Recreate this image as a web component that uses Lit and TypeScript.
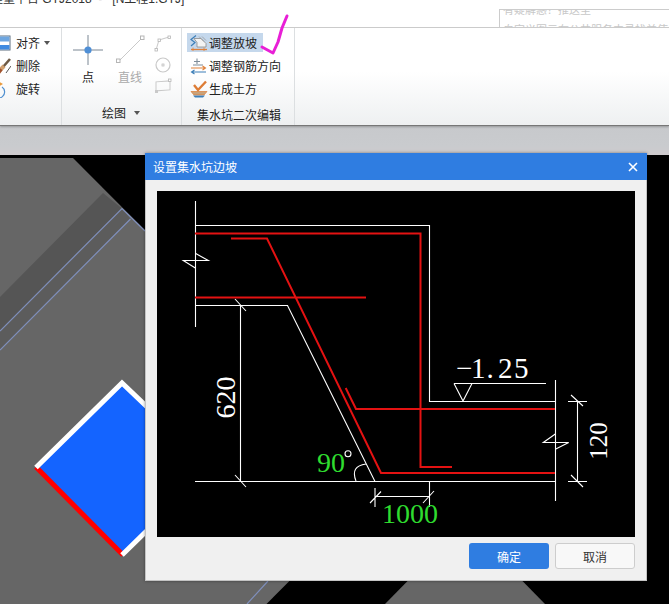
import { LitElement, html, css } from "lit";
import { customElement } from "lit/decorators.js";

const slopeIcon = html`<svg class="ico" width="18" height="18" viewBox="0 0 18 18" fill="none">
  <path d="M6 1.5L1 5.5L5 8.5L1 12" stroke="#3d7fb8" stroke-width="1.2"/>
  <path d="M4 4.5H11L16 9.5V13H7V8.5Z" fill="#f3f3f3" stroke="#8a8a8a" stroke-width=".8"/>
  <path d="M9 2.5L14 7.5M12 2.5L16 6.5" stroke="#9a9a9a" stroke-width=".8"/>
  <path d="M1 15.5H17" stroke="#e0813a" stroke-width="1.3"/>
  <path d="M3 13.5V17M14 13.5V17" stroke="#e0813a" stroke-width=".8"/>
</svg>`;
const rebarIcon = html`<svg class="ico" width="18" height="18" viewBox="0 0 18 18" fill="none">
  <path d="M7 1.5V7M4 4.5H10M3 8H13" stroke="#7f8d99" stroke-width="1.1"/>
  <path d="M1 11H15M12.5 9L15.5 11L12.5 13" stroke="#e0813a" stroke-width="1.1"/>
  <path d="M16 15H2M4.5 13L1.5 15L4.5 17" stroke="#3d7fb8" stroke-width="1.1"/>
</svg>`;
const earthIcon = html`<svg class="ico" width="18" height="18" viewBox="0 0 18 18" fill="none">
  <path d="M4 5L8 10L16 1.5" stroke="#dd7c35" stroke-width="2.4"/>
  <path d="M1 11.5H17L14 15H4Z" fill="#c9a27a" stroke="#dd7c35" stroke-width=".7"/>
  <path d="M3 15.5H15L13 17.5H5Z" fill="#3d7fb8"/>
</svg>`;
const alignIcon = html`<svg class="ico" width="14" height="16" viewBox="0 0 14 16">
  <rect x="0" y="1" width="13" height="14" fill="#fff" stroke="#5d6f80"/>
  <rect x="0" y="1.5" width="12.5" height="5" fill="#6ea6e0"/>
  <rect x="0" y="10" width="12.5" height="4.5" fill="#3f8ae0"/>
</svg>`;
const brushIcon = html`<svg class="ico" width="14" height="16" viewBox="0 0 14 16" fill="none">
  <path d="M13 1L6 9" stroke="#6d5a45" stroke-width="2.6"/>
  <path d="M7 8L3 12" stroke="#d0a070" stroke-width="4"/>
  <path d="M4 11L1 15" stroke="#a0522d" stroke-width="4"/>
  <path d="M9 15L14 8" stroke="#555" stroke-width="1"/>
</svg>`;
const rotateIcon = html`<svg class="ico" width="14" height="18" viewBox="0 0 14 18" fill="none">
  <path d="M5 5A6 6 0 1 1 1 4" stroke="#4f8fd0" stroke-width="1.2" transform="translate(0 2)"/>
  <path d="M1 1L6 4L1 7Z" fill="#e89a3c"/>
</svg>`;

@customElement("app-root")
export class AppRoot extends LitElement {
  static styles = css`
    :host {
      display: flex;
      flex-direction: column;
      position: relative;
      width: 669px;
      height: 604px;
      overflow: hidden;
      font-family: "Noto Sans CJK SC", "Liberation Sans", sans-serif;
      font-size: 12px;
      color: #222;
      background: #000;
    }
    .title {
      height: 27px;
      flex: none;
      background: #fff;
      border-bottom: 1px solid #cfcfcf;
      display: flex;
      justify-content: space-between;
      overflow: hidden;
    }
    .title-text {
      margin: -9px 0 0 -9px;
      line-height: 16px;
      height: 16px;
      white-space: pre;
      font-family: "Liberation Sans", "Noto Sans CJK SC", sans-serif;
      color: #333;
    }
    .notice {
      width: 170px;
      height: 18px;
      margin-top: 9px;
      flex: none;
      box-sizing: border-box;
      border: 1px solid #ccc;
      border-right: none;
      border-bottom: none;
      overflow: hidden;
      padding-left: 3px;
      color: #c8c8c8;
      font-size: 11px;
      line-height: 20px;
      white-space: nowrap;
    }
    .notice div:first-child { margin-top: -11px; }
    .ribbon {
      height: 97px;
      flex: none;
      display: flex;
      background: linear-gradient(#fff 0%, #fff 45%, #eef0f1 100%);
      border-bottom: 1px solid #777;
      box-shadow: 0 1px 2px rgba(0,0,0,.25);
      position: relative;
    }
    .group {
      display: flex;
      flex-direction: column;
      border-right: 1px solid #dcdfe1;
      box-sizing: border-box;
      overflow: hidden;
    }
    .g1 { width: 62px; padding-top: 3px; }
    .g2 { width: 120px; padding-bottom: 4px; }
    .g3 { width: 113px; padding: 5px 0 2px 5px; gap: 4px; }
    .row1 {
      height: 23px;
      display: flex;
      align-items: center;
      gap: 5px;
      margin-left: -3px;
    }
    .ico { flex: none; }
    .caret {
      width: 0;
      height: 0;
      border: 3px solid transparent;
      border-top: 4px solid #555;
      border-bottom: none;
      margin-left: -1px;
    }
    .tools { display: flex; padding-top: 7px; flex: 1; }
    .tool {
      display: flex;
      flex-direction: column;
      align-items: center;
      line-height: 16px;
      gap: 4px;
    }
    .t1 { width: 52px; }
    .t2 { width: 32px; }
    .t2 span { color: #aaa; }
    .minis {
      display: flex;
      flex-direction: column;
      margin-left: 8px;
      gap: 3px;
    }
    .glabel {
      display: flex;
      justify-content: center;
      align-items: center;
      line-height: 16px;
      gap: 6px;
      margin-top: auto;
    }
    .glabel .caret { margin-left: 2px; }
    .g2 .glabel { padding-right: 1px; }
    .g3 .glabel { padding-right: 3px; }
    .row3 {
      height: 19px;
      width: 76px;
      display: flex;
      align-items: center;
      gap: 1px;
      padding-left: 3px;
      box-sizing: border-box;
      white-space: nowrap;
    }
    .row3.active { background: #c5d8ec; }
    .strip {
      height: 29px;
      flex: none;
      background: linear-gradient(#c7c9cc, #c9cbce 70%, #cfcbce);
    }
    .canvas { display: block; flex: 1; min-height: 0; }
    .check { position: absolute; left: 0; top: 0; pointer-events: none; }
    .dialog {
      position: absolute;
      left: 145px;
      top: 153px;
      width: 502px;
      height: 428px;
      box-sizing: border-box;
      background: #f0f0f0;
      border: 1px solid #c4c4c4;
      border-top: none;
      box-shadow: 0 0 3px rgba(0,0,0,.4);
      display: flex;
      flex-direction: column;
    }
    .dlg-title {
      height: 27px;
      flex: none;
      margin: 0 -1px;
      background: #2f7de1;
      color: #fff;
      display: flex;
      align-items: center;
      justify-content: space-between;
      padding: 0 9px 0 8px;
    }
    .dlg-body {
      flex: 1;
      display: flex;
      flex-direction: column;
      padding: 11px 11px 11px;
      gap: 6px;
    }
    .draw { display: block; background: #000; }
    .btns { display: flex; justify-content: flex-end; gap: 6px; }
    .btn {
      width: 80px;
      height: 26px;
      box-sizing: border-box;
      border-radius: 3px;
      display: flex;
      align-items: center;
      justify-content: center;
    }
    .ok { background: #2f7de1; color: #fff; }
    .cancel { background: #f8f8f8; border: 1px solid #cdcdcd; color: #333; }
    .w { stroke: #fff; stroke-width: 1.1; fill: none; }
    .r { stroke: #e41212; stroke-width: 2; fill: none; }
    .tw { fill: #fff; font-family: "Liberation Serif", serif; }
    .tg { fill: #2fdc2f; font-family: "Liberation Serif", serif; }
  `;

  render() {
    return html`
      <div class="title">
        <div class="title-text">程量平台 GTJ2018  -   [N工程1.GTJ]</div>
        <div class="notice"><div>有疑解惑？推送至</div><div>自定义图元在公共服务中寻找并使用</div></div>
      </div>
      <div class="ribbon">
        <div class="group g1">
          <div class="row1">${alignIcon}<span>对齐</span><i class="caret"></i></div>
          <div class="row1">${brushIcon}<span>删除</span></div>
          <div class="row1">${rotateIcon}<span>旋转</span></div>
        </div>
        <div class="group g2">
          <div class="tools">
            <div class="tool t1">
              <svg width="30" height="30" viewBox="0 0 30 30" fill="none">
                <path d="M15 0V30M0 15H30" stroke="#7b8794"/>
                <circle cx="15" cy="15" r="3.6" fill="#4f8fd6"/>
              </svg>
              <span>点</span>
            </div>
            <div class="tool t2">
              <svg width="30" height="30" viewBox="0 0 30 30" fill="none">
                <path d="M4 26L27 3" stroke="#c9c9c9"/>
                <rect x="1.5" y="24" width="3.5" height="3.5" fill="#fff" stroke="#b5b5b5"/>
                <rect x="25.5" y="1" width="3.5" height="3.5" fill="#fff" stroke="#b5b5b5"/>
              </svg>
              <span>直线</span>
            </div>
            <div class="minis">
              <svg width="18" height="18" viewBox="0 0 18 18" fill="none">
                <path d="M2 15L5 5L15 2" stroke="#c9c9c9"/>
                <rect x="1" y="13.5" width="2.5" height="2.5" fill="#fff" stroke="#b5b5b5" stroke-width=".8"/>
                <rect x="4" y="4" width="2.5" height="2.5" fill="#fff" stroke="#b5b5b5" stroke-width=".8"/>
                <rect x="14" y="1" width="2.5" height="2.5" fill="#fff" stroke="#b5b5b5" stroke-width=".8"/>
              </svg>
              <svg width="18" height="18" viewBox="0 0 18 18" fill="none">
                <circle cx="9" cy="9" r="7" stroke="#c9c9c9" stroke-width="1.2"/>
                <rect x="8" y="8" width="2" height="2" fill="#fff" stroke="#b5b5b5" stroke-width=".7"/>
              </svg>
              <svg width="18" height="18" viewBox="0 0 18 18" fill="none">
                <path d="M2 5H16V14H2Z" stroke="#c9c9c9" transform="skewY(-4)" />
                <rect x="1" y="13" width="3" height="3" fill="#c9c9c9"/>
                <rect x="14.5" y="2" width="2.5" height="2.5" fill="#fff" stroke="#b5b5b5" stroke-width=".8"/>
              </svg>
            </div>
          </div>
          <div class="glabel"><span>绘图</span><i class="caret"></i></div>
        </div>
        <div class="group g3">
          <div class="row3 active">${slopeIcon}<span>调整放坡</span></div>
          <div class="row3">${rebarIcon}<span>调整钢筋方向</span></div>
          <div class="row3">${earthIcon}<span>生成土方</span></div>
          <div class="glabel"><span>集水坑二次编辑</span></div>
        </div>
      </div>
      <div class="strip"></div>
      <svg class="canvas" width="669" height="449" viewBox="0 155 669 449">
        <polygon points="0,158 73,158 392,478 266.5,604 0,604" fill="#666"/>
        <polygon points="385,604 440,548 490,548 545,604" fill="#666"/>
        <polygon points="0,297 103,193 122,208.5 0,331" fill="#555"/>
        <polygon points="0,331 122,208.5 130.5,219 0,350" fill="#5c5c5c"/>
        <path d="M0 331L122 208.5L145 231M0 350L130.5 219M268 581L247 604" stroke="#7f8fbb" stroke-width="1.2" fill="none"/>
        <polygon points="122,383 211,468 122,554 37,468" fill="#1464ff"/>
        <path d="M36 467L123 555" stroke="#f00" stroke-width="5" fill="none"/>
        <path d="M36 467.5L122 383L211 468L122 555" stroke="#fff" stroke-width="5" fill="none"/>
      </svg>
      <svg class="check" width="669" height="80" viewBox="0 0 669 80" fill="none">
        <path d="M287 16L282 28L278 42L273 53L262 47" stroke="#e81fd6" stroke-width="3" stroke-linejoin="round" stroke-linecap="round"/>
      </svg>
      <div class="dialog">
        <div class="dlg-title">
          <span>设置集水坑边坡</span>
          <svg width="10" height="10" viewBox="0 0 10 10"><path d="M1 1L9 9M9 1L1 9" stroke="#fff" stroke-width="1.6"/></svg>
        </div>
        <div class="dlg-body">
          <svg class="draw" width="478" height="346" viewBox="157 191 478 346">
            <path class="w" d="M195.5 201V327M195.5 225.5H429.5V401.5H555.5M195.5 305.5H287.5L375 481.5M195 481.5H555.5M555.5 380V501"/>
            <path class="w" d="M195.3 253.3L208.3 260.5H183.3L195.3 268M555.3 434L543.3 442.5H568.7L555.3 449.3"/>
            <path class="w" d="M240.5 305V481.5M235 299L246 311M235 475L246 487"/>
            <path class="w" d="M454 383.5H546M454 383.5L463 401L472 383.5"/>
            <path class="w" d="M577.5 401V481.5M568 401.5H587M568 481.5H587M571 395L583 406M571 475L583 487"/>
            <path class="w" d="M375 488V507M429.5 482V507M375 496.5H429.5M370 503L381 491.5M423 503L434 491"/>
            <path class="w" d="M356 481Q350 466 366 464"/>
            <circle class="w" cx="348" cy="453.7" r="3"/>
            <path class="r" d="M195 233.5H420.5V467H452M231 238.5H267L381 473H555M195 297.5H366M345.7 388L356 409H555"/>
            <text class="tw" font-size="29" y="378" x="456 471 486.5 498 514">−1.25</text>
            <text class="tw" font-size="25" text-anchor="middle" transform="translate(607 441) rotate(-90)">120</text>
            <text class="tw" font-size="28" text-anchor="middle" transform="translate(235 397.5) rotate(-90)">620</text>
            <text class="tg" font-size="28" x="382" y="523">1000</text>
            <text class="tg" font-size="28" x="317" y="472">90</text>
          </svg>
          <div class="btns">
            <div class="btn ok">确定</div>
            <div class="btn cancel">取消</div>
          </div>
        </div>
      </div>
    `;
  }
}
